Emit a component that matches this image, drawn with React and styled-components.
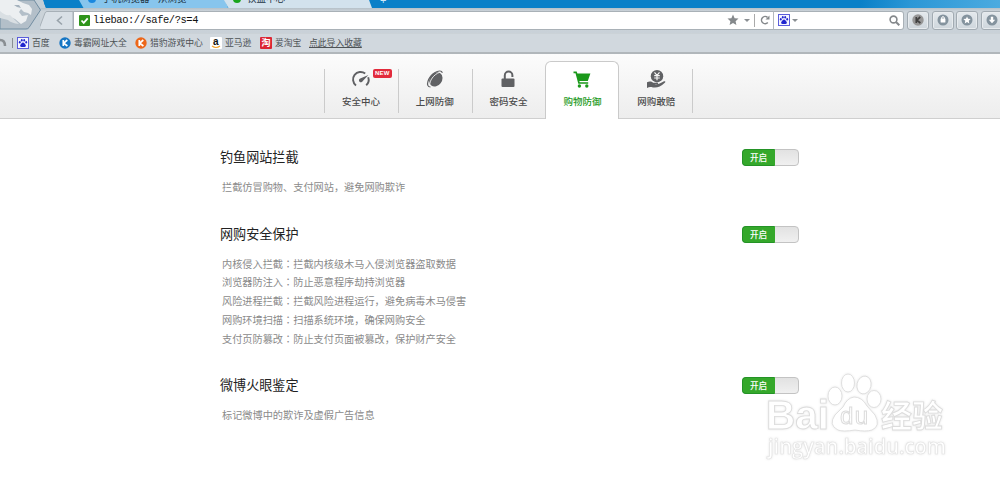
import styled, { createGlobalStyle } from "styled-components";

const GlobalStyle = createGlobalStyle`
  * {
    box-sizing: border-box;
  }
  body {
    margin: 0;
    background: #fff;
    font-family: "Liberation Sans", "Noto Sans CJK SC", sans-serif;
    overflow: hidden;
  }
`;

const Page = styled.div`
  position: relative;
  width: 1000px;
  height: 481px;
  overflow: hidden;
  background: #fff;
`;

const TabStrip = styled.div`
  display: flex;
  height: 8px;
  padding-left: 79px;
  overflow: hidden;
  background: linear-gradient(100deg, #0a80c8 0 86%, #2b97d6 91%, #4cabe0);
`;

const BrowserTab = styled.div`
  display: flex;
  align-items: flex-end;
  flex: 0 0 ${(props) => props.width};
  height: 8px;
  margin-left: ${(props) => props.pull || "0"};
  padding-left: ${(props) => props.pad};
  gap: 6px;
  overflow: hidden;
  background: ${(props) => (props.active ? "#d2e2ed" : "#87c5ed")};
  clip-path: polygon(0 0, 98% 0, 100% 100%, 3% 100%);
  color: #1d3444;
  font-size: 9.5px;
  line-height: 12px;
  white-space: pre;
`;

const TabDot = styled.span`
  width: 8px;
  height: 8px;
  margin-bottom: 5px;
  border-radius: 50%;
  flex: none;
  background: ${(props) => props.color};
`;

const TabText = styled.span`
  margin-bottom: 3px;
`;

const NewTab = styled.span`
  margin-left: 8px;
  color: #cfe8f8;
  font-size: 11px;
  line-height: 1px;
`;

const Toolbar = styled.div`
  display: flex;
  align-items: center;
  height: 25px;
  padding: 0 0 1px 39px;
  background: linear-gradient(#b5c0c8, #cbd3d9 3px, #c9d1d8);
`;

const BackButton = styled.div`
  display: flex;
  flex: none;
  width: 34px;
  height: 19px;
`;

const AddressBar = styled.div`
  display: flex;
  align-items: center;
  flex: none;
  width: 701px;
  height: 19px;
  padding: 0 3px 0 5px;
  border: 1px solid #a9b1b7;
  border-right-color: #b4b9bd;
  background: #fff;
`;

const Url = styled.span`
  flex: 1;
  padding: 0 0 1px 3px;
  color: #111;
  font: 10.4px/16px "Liberation Mono", monospace;
  letter-spacing: -0.4px;
`;

const SearchBox = styled.div`
  display: flex;
  align-items: center;
  gap: 2px;
  flex: none;
  width: 130px;
  height: 19px;
  padding: 0 3px 0 4px;
  border: 1px solid #a9b1b7;
  border-left: 0;
  border-radius: 0 3px 3px 0;
  background: #fff;
`;

const Spacer = styled.span`
  flex: 1;
`;

const Caret = styled.span`
  width: 0;
  height: 0;
  border: 3px solid transparent;
  border-top-color: #8a8f93;
  border-bottom: 0;
  margin-left: ${(props) => props.gap || "0"};
`;

const BarLine = styled.span`
  width: 1px;
  height: 13px;
  margin: 0 5px 0 4px;
  background: #aaa;
`;

const ToolButton = styled.div`
  display: flex;
  align-items: center;
  justify-content: center;
  flex: none;
  width: 22px;
  height: 19px;
  margin-left: ${(props) => props.gap || "2.5px"};
  border: 1px solid #a2abb2;
  border-radius: 3px;
  background: linear-gradient(#e4e9ed, #ced6dc);
  box-shadow: inset 0 0 0 1px #e7ebee;
`;

const BookmarkBar = styled.div`
  display: flex;
  align-items: center;
  height: 21px;
  border-top: 1px solid #cbd2d7;
  border-bottom: 2px solid #b1b7bb;
  background: #d1d8de;
`;

const Bookmark = styled.div`
  display: flex;
  align-items: center;
  gap: 3px;
  width: ${(props) => props.width};
  height: 16px;
  flex: none;
  color: #4d5255;
  font-size: 8.8px;
  line-height: 13px;
  white-space: nowrap;
  text-decoration: ${(props) => (props.underlined ? "underline" : "none")};
  text-underline-offset: 1px;
`;

const SquareLogo = styled.span`
  display: flex;
  align-items: center;
  justify-content: center;
  width: 12px;
  height: 12px;
  border-radius: 1px;
  background: ${(props) => props.fill};
  color: ${(props) => props.ink};
  font-size: ${(props) => props.size};
  font-weight: bold;
  line-height: 10px;
`;

const Header = styled.header`
  display: flex;
  align-items: flex-end;
  height: 65px;
  padding-left: 324px;
  border-bottom: 1px solid #cfcfcf;
  background: linear-gradient(#fcfcfc, #ededed);
`;

const NavItem = styled.div`
  position: relative;
  display: flex;
  flex-direction: column;
  align-items: center;
  flex: none;
  width: ${(props) => (props.active ? "74px" : "73.8px")};
  height: 58px;
  margin-bottom: -1px;
  padding-top: 7px;
  border: ${(props) => (props.active ? "1px solid #cacaca" : "1px solid transparent")};
  border-bottom: 0;
  border-radius: ${(props) => (props.active ? "6px 6px 0 0" : "0")};
  background: ${(props) => (props.active ? "#fff" : "none")};
  color: ${(props) => (props.active ? "#1a991a" : "#606164")};

  &::before,
  &:last-child::after {
    content: "";
    display: ${(props) => (props.ruled ? "block" : "none")};
    position: absolute;
    top: 7px;
    left: -1px;
    width: 1px;
    height: 44px;
    background: #cbcbcb;
  }
  &:last-child::after {
    display: block;
    left: auto;
    right: -1px;
  }
`;

const NavLabel = styled.span`
  margin-top: 6px;
  color: ${(props) => (props.active ? "#1a991a" : "#4b4b4b")};
  font-size: 9.5px;
  font-weight: 500;
  line-height: 14px;
`;

const NewBadge = styled.span`
  position: absolute;
  top: 7px;
  right: 5px;
  width: 19px;
  height: 9px;
  border-radius: 2px;
  background: #e22b3c;
  color: #fff;
  font-size: 6px;
  font-weight: bold;
  line-height: 9px;
  letter-spacing: 0.2px;
  text-align: center;
`;

const Settings = styled.main`
  display: flex;
  flex-direction: column;
  width: 799px;
  padding: 29px 0 0 220px;
`;

const Section = styled.section`
  display: flex;
  justify-content: space-between;
  align-items: flex-start;
  height: ${(props) => props.height};
`;

const Title = styled.h2`
  margin: 0;
  color: #222;
  font-size: 13.1px;
  font-weight: normal;
  line-height: 20px;
`;

const Details = styled.div`
  margin: 10px 0 0 2px;
  color: #8a8a8a;
  font-family: "Noto Sans CJK SC", sans-serif;
  font-size: 10.18px;
  line-height: 18.8px;
  white-space: nowrap;
`;

// The TC face sets the full-width colon in the middle of its cell.
const Colon = styled.span`
  font-family: "Noto Sans CJK TC", sans-serif;
`;

const Toggle = styled.div`
  display: flex;
  width: 57px;
  height: 17px;
  margin-top: 1px;
  border: 1px solid #c3c3c3;
  border-radius: 4px;
  background: linear-gradient(#e2e2e2, #f0f0f0);
`;

const ToggleOn = styled.span`
  width: 33px;
  height: 17px;
  margin: -1px 0 0 -1px;
  border: 1px solid #249326;
  border-right-color: #35a82b;
  border-radius: 4px 0 0 4px;
  background: #35a82b;
  color: #fff;
  font-size: 8.6px;
  font-weight: 500;
  line-height: 16px;
  text-align: center;
`;

const Watermark = styled.svg`
  position: absolute;
  left: 760px;
  top: 368px;
  filter: drop-shadow(0 0 1px rgba(0, 0, 0, 0.1));
`;

const Lion = styled.svg`
  position: absolute;
  left: 0;
  top: 0;
`;

const Paw = () => (
  <svg width="12" height="12" viewBox="0 0 12 12">
    <rect x="0.5" y="0.5" width="11" height="11" fill="#f5f5ff" stroke="#5b5edb" />
    <g fill="#2025cf">
      <ellipse cx="2.8" cy="5.2" rx="0.9" ry="1.2" />
      <ellipse cx="4.8" cy="3.2" rx="0.9" ry="1.3" />
      <ellipse cx="7.2" cy="3.2" rx="0.9" ry="1.3" />
      <ellipse cx="9.2" cy="5.2" rx="0.9" ry="1.2" />
      <path d="M6 5.4c1.200 0 1.400 1 2.200 1.800 1.200 1.200.8 2.800-.8 2.800H4.600c-1.600 0-2-1.600-.8-2.800.8-.8 1-1.800 2.200-1.800z" />
    </g>
  </svg>
);

const KLogo = ({ fill, ink = "#fff", size = 12 }) => (
  <svg width={size} height={size} viewBox="0 0 12 12">
    <circle cx="6" cy="6" r="5.7" fill={fill} />
    <path d="M4.3 3v6M8.3 3 4.8 6.2 8.4 9" fill="none" stroke={ink} strokeWidth="1.7" />
  </svg>
);

const starPath = "M6 .6 7.6 4.2l3.9.4-2.9 2.6.8 3.9L6 9.1l-3.4 2 .8-3.9L.5 4.6l3.9-.4z";

const RoundIcon = ({ kind }) => (
  <svg width="12" height="12" viewBox="0 0 12 12">
    <circle cx="6" cy="6" r="5.5" fill="#84939e" />
    {kind === "lock" && (
      <>
        <path d="M4.7 5V4a1.3 1.3 0 0 1 2.600 0v1" fill="none" stroke="#fff" />
        <rect x="3.600" y="4.600" width="4.800" height="4" rx=".5" fill="#fff" />
      </>
    )}
    {kind === "star" && <path transform="translate(2 2) scale(.67)" d={starPath} fill="#fff" />}
    {kind === "down" && <path d="M4.8 2.8h2.4v3h2L6 9.2 2.8 5.8h2z" fill="#fff" />}
  </svg>
);

const GaugeIcon = () => (
  <svg width="20" height="20" viewBox="0 0 20 20">
    <path d="M5 16.5A7.4 7.4 0 0 1 14.2 4.5M17.2 8.3A7.4 7.4 0 0 1 15.2 16.3" fill="none" stroke="currentColor" strokeWidth="1.9" />
    <path d="M17.4 5.9 11.8 12.1A2 2 0 1 1 9.2 9.5z" fill="currentColor" />
  </svg>
);

const GlobeIcon = () => (
  <svg width="20" height="20" viewBox="0 0 20 20">
    <ellipse cx="10.8" cy="10.4" rx="6.200" ry="7.600" transform="rotate(36 10.8 10.4)" fill="currentColor" />
    <path d="M5.500 18C-.2 18 3 8 9.700 3.800c3.400-2.200 7.200-2.600 7.600.1" fill="none" stroke="currentColor" strokeWidth="1.200" />
    <path d="M4.800 16.600C4.300 11.800 8.400 5.600 14.800 3.200" fill="none" stroke="#f5f5f5" strokeWidth="0.900" />
  </svg>
);

const LockIcon = () => (
  <svg width="20" height="20" viewBox="0 0 20 20">
    <rect x="3.5" y="9.5" width="13" height="8.5" rx="1" fill="currentColor" />
    <path d="M6.8 10V6.4a3.8 3.8 0 0 1 7.6 0V8" fill="none" stroke="currentColor" strokeWidth="2" />
  </svg>
);

const CartIcon = () => (
  <svg width="20" height="20" viewBox="0 0 20 20">
    <path d="M1.5 2.5h3.2l.7 2h13L15.8 12H7.3l.4 1.3h8.5v1.4H6.3L3.5 4.2h-2z" fill="currentColor" />
    <circle cx="7.4" cy="17" r="1.7" fill="currentColor" />
    <circle cx="14.8" cy="17" r="1.7" fill="currentColor" />
  </svg>
);

const PayoutIcon = () => (
  <svg width="20" height="20" viewBox="0 0 20 20">
    <circle cx="11" cy="7.2" r="6.2" fill="currentColor" />
    <path d="m8.5 3.3 2.5 3 2.5-3M11 6v5.2M8.2 6.7h5.6M8.2 9h5.6" fill="none" stroke="#f5f5f5" strokeWidth="1.2" />
    <path d="M1 13.2c2.5-1.4 4.6-.8 6.2.5h4.2c1 .1.9 1.3-.1 1.4H8.5c3 .8 5-.2 9.5-2.8 1.5-.5 1.8.5.8 1.4-4.5 4.3-8 5.4-11.9 4.7-2-.4-3.7-.6-5.9.5z" fill="currentColor" />
  </svg>
);

const navItems = [
  { label: "安全中心", icon: <GaugeIcon />, ruled: true, badge: "NEW" },
  { label: "上网防御", icon: <GlobeIcon />, ruled: true },
  { label: "密码安全", icon: <LockIcon />, ruled: true },
  { label: "购物防御", icon: <CartIcon />, active: true },
  { label: "网购敢赔", icon: <PayoutIcon /> },
];

const sections = [
  {
    title: "钓鱼网站拦截",
    height: "76.5px",
    lines: [{ text: "拦截仿冒购物、支付网站，避免网购欺诈" }],
  },
  {
    title: "网购安全保护",
    height: "151.5px",
    lines: [
      { name: "内核侵入拦截", text: "拦截内核级木马入侵浏览器盗取数据" },
      { name: "浏览器防注入", text: "防止恶意程序劫持浏览器" },
      { name: "风险进程拦截", text: "拦截风险进程运行，避免病毒木马侵害" },
      { name: "网购环境扫描", text: "扫描系统环境，确保网购安全" },
      { name: "支付页防篡改", text: "防止支付页面被篡改，保护财产安全" },
    ],
  },
  {
    title: "微博火眼鉴定",
    height: "70px",
    lines: [{ text: "标记微博中的欺诈及虚假广告信息" }],
  },
];

const Browser = () => (
  <>
    <TabStrip>
      <BrowserTab width="149px" pad="9px">
        <TabDot color="#1988df" />
        <TabText>手机浏览器 - 从浏览</TabText>
      </BrowserTab>
      <BrowserTab width="148px" pull="-4px" pad="9px" active>
        <TabDot color="#18a51c" />
        <TabText>铁盘中心</TabText>
      </BrowserTab>
      <NewTab>+</NewTab>
    </TabStrip>
    <Toolbar>
      <BackButton>
        <svg width="34" height="19" viewBox="0 0 34 19">
          <path d="M8 .5h26v18H2Q-.5 18.5.8 15.8L6 2Q6.6.5 8 .5z" fill="#d9e0e6" stroke="#a7b0b7" />
          <path d="m23 5.500-4.500 4 4.500 4" fill="none" stroke="#98a2aa" strokeWidth="1.600" />
        </svg>
      </BackButton>
      <AddressBar>
        <svg width="11" height="11" viewBox="0 0 11 11">
          <rect width="11" height="11" rx="1" fill="#2f941b" />
          <path d="m2.500 5.500 2.200 2.300 4-4.500" fill="none" stroke="#fff" strokeWidth="1.800" />
        </svg>
        <Url>liebao://safe/?s=4</Url>
        <svg width="12" height="12" viewBox="0 0 12 12">
          <path d={starPath} fill="#85898c" />
        </svg>
        <Caret gap="5px" />
        <BarLine />
        <svg width="10" height="10" viewBox="0 0 10 10">
          <path d="M7.800 7.500A3.600 3.600 0 1 1 7.500 2.400" fill="none" stroke="#85898c" strokeWidth="1.500" />
          <path d="M9.500.5v4H5.500z" fill="#85898c" />
        </svg>
      </AddressBar>
      <SearchBox>
        <Paw />
        <Caret />
        <Spacer />
        <svg width="11" height="11" viewBox="0 0 11 11" fill="none" stroke="#85898c">
          <circle cx="4.500" cy="4.500" r="3.400" strokeWidth="1.600" />
          <path d="m7 7 3.300 3.300" strokeWidth="2" />
        </svg>
      </SearchBox>
      <ToolButton gap="3px">
        <KLogo fill="#969696" ink="#404040" />
      </ToolButton>
      <ToolButton>
        <RoundIcon kind="lock" />
      </ToolButton>
      <ToolButton>
        <RoundIcon kind="star" />
      </ToolButton>
      <ToolButton>
        <RoundIcon kind="down" />
      </ToolButton>
    </Toolbar>
    <BookmarkBar>
      <Bookmark width="17px">
        <svg width="14" height="12" viewBox="0 0 14 12">
          <path d="M0 3q5 0 5 6" fill="none" stroke="#8a8f93" strokeWidth="2.500" />
          <path d="M12.500 1v10" stroke="#898f93" />
        </svg>
      </Bookmark>
      <Bookmark width="42px">
        <Paw />
        百度
      </Bookmark>
      <Bookmark width="76px">
        <KLogo fill="#1676c4" />
        毒霸网址大全
      </Bookmark>
      <Bookmark width="75px">
        <KLogo fill="#ec671a" />
        猎豹游戏中心
      </Bookmark>
      <Bookmark width="50px">
        <svg width="12" height="12" viewBox="0 0 12 12">
          <rect width="12" height="12" rx="1" fill="#fff" />
          <text x="3" y="8" fontSize="10" fontWeight="bold" fontFamily="Liberation Sans" fill="#111">a</text>
          <path d="M2 9q4 3 8 0" fill="none" stroke="#f3a22c" strokeWidth="1.200" />
        </svg>
        亚马逊
      </Bookmark>
      <Bookmark width="49px">
        <SquareLogo fill="#dc2634" ink="#fff" size="9px">淘</SquareLogo>
        爱淘宝
      </Bookmark>
      <Bookmark width="60px" underlined>
        点此导入收藏
      </Bookmark>
    </BookmarkBar>
    <Lion width="46" height="30" viewBox="0 0 46 30">
      <path d="M0 0h46l-2 3 2 5H40v22H0z" fill="#c3ced6" />
      <path d="M43 0h3v8z" fill="#0a80c8" />
      <path d="M0 0h34l6.500 10L29 27.500q-1 1.500-3 1.500H0z" fill="#b3bfc9" stroke="#718da1" />
      <path d="M0 0h17l6 3 6 2 3 4-1 6-3-2-4-1-3-3-2 3 3 4 6-1-2 6-5 3-6-5-5-2-10-1z" fill="#eceff1" />
      <path d="M0 11q5 5 10 4l9 9q-8-1-11-4l-8-2z" fill="#d9dfe3" />
      <path d="m14 5 5 0 2 3-4-1z" fill="#a5b2bd" />
    </Lion>
  </>
);

const App = () => (
  <Page>
    <GlobalStyle />
    <Browser />
    <Header>
      {navItems.map(({ label, icon, active, ruled, badge }) => (
        <NavItem key={label} active={active} ruled={ruled}>
          {icon}
          <NavLabel active={active}>{label}</NavLabel>
          {badge && <NewBadge>{badge}</NewBadge>}
        </NavItem>
      ))}
    </Header>
    <Settings>
      {sections.map(({ title, height, lines }) => (
        <Section key={title} height={height}>
          <div>
            <Title>{title}</Title>
            <Details>
              {lines.map(({ name, text }) => (
                <div key={text}>
                  {name}
                  {name && <Colon>：</Colon>}
                  {text}
                </div>
              ))}
            </Details>
          </div>
          <Toggle>
            <ToggleOn>开启</ToggleOn>
          </Toggle>
        </Section>
      ))}
    </Settings>
    <Watermark width="200" height="100" viewBox="0 0 200 100">
      <g fill="#fff" stroke="#dcdcdc" strokeWidth="0.900">
        <text x="6" y="61" fontSize="40" fontWeight="bold" fontFamily="Liberation Sans" textLength="63" lengthAdjust="spacingAndGlyphs">Bai</text>
        <ellipse cx="75" cy="28" rx="7" ry="9" />
        <ellipse cx="88" cy="15" rx="6.500" ry="9" />
        <ellipse cx="104" cy="17" rx="7" ry="9" transform="rotate(12 104 17)" />
        <ellipse cx="114" cy="31" rx="7" ry="8.500" />
        <path d="M94 29q8 0 13 9l8 9q6 11-3 15-6 2-17 0-12 2-17 0-10-5-3-15l8-8q4-9 11-10z" />
        <text x="80" y="56" fontSize="24" fontFamily="Liberation Sans" textLength="28" strokeWidth="1">du</text>
        <text x="121" y="59" fontSize="31" fontFamily="Noto Sans CJK SC" fontWeight="bold">经验</text>
      </g>
      <text x="8" y="86" fontSize="21.500" fontFamily="Open Sans" fontWeight="600" fill="#fff" stroke="#e3e3e3" strokeWidth="0.700" textLength="178" lengthAdjust="spacingAndGlyphs">jingyan.baidu.com</text>
    </Watermark>
  </Page>
);

export default App;
